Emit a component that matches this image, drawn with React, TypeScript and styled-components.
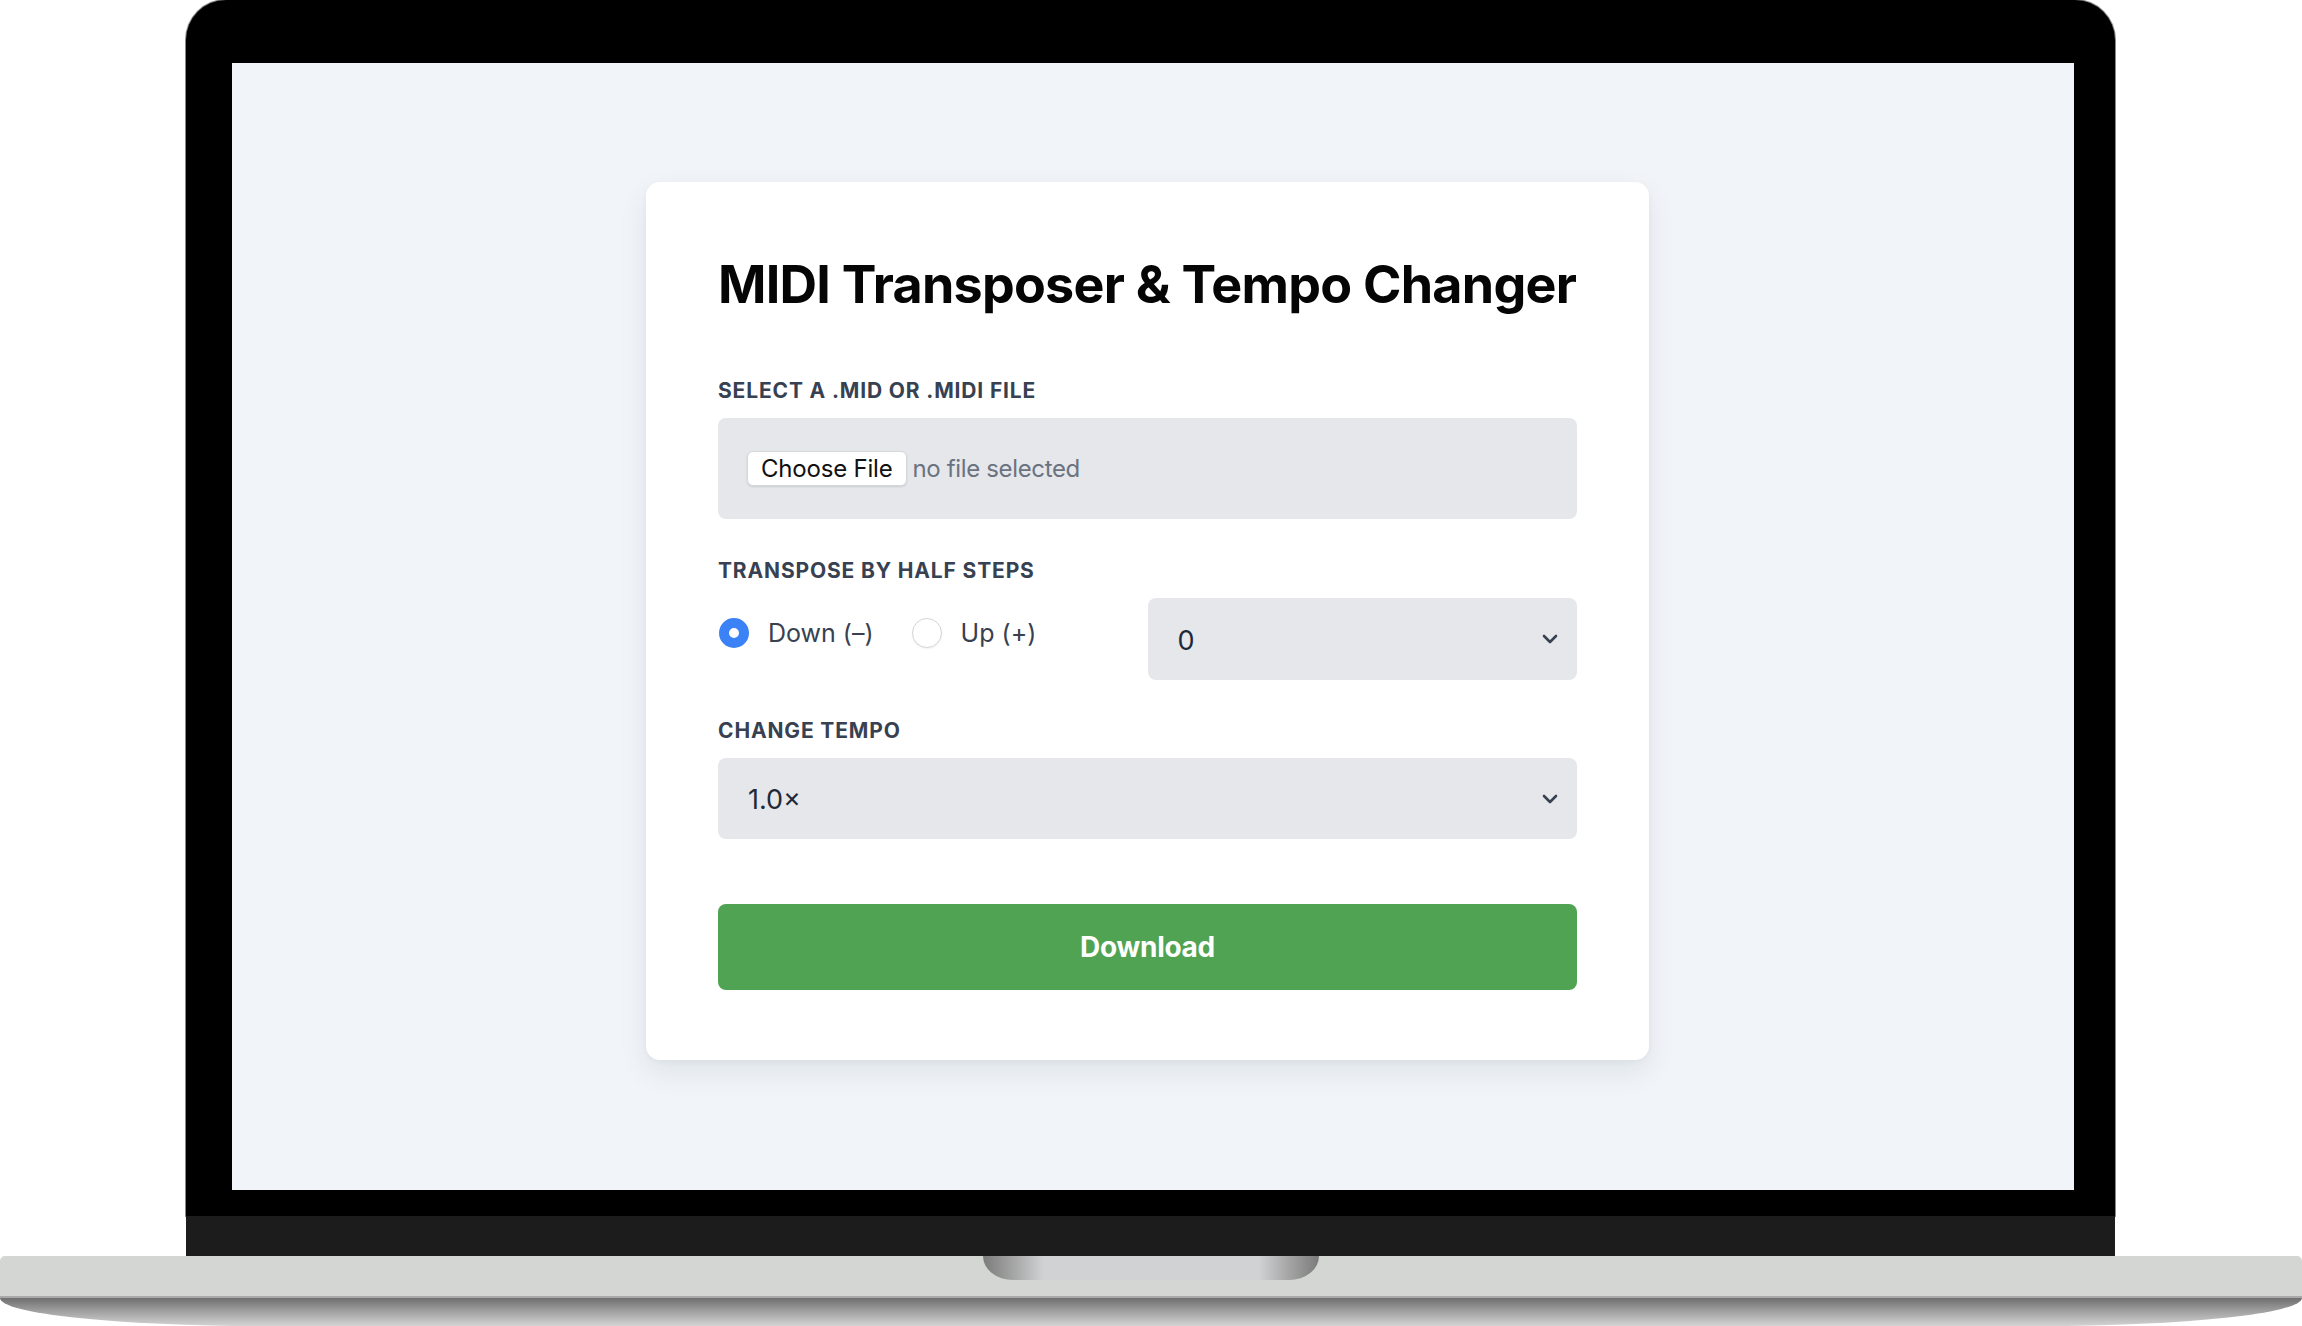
import React, { useState } from "react";
import styled, { createGlobalStyle } from "styled-components";

const GlobalStyle = createGlobalStyle`
  * { box-sizing: border-box; }
  html, body { margin: 0; padding: 0; background: #ffffff; }
  body { font-family: Inter, "Noto Sans", "Liberation Sans", sans-serif; }
`;

const Stage = styled.div`
  width: 2302px;
  height: 1326px;
  overflow: hidden;
  display: flex;
  flex-direction: column;
  background: #ffffff;
`;

const Lid = styled.div`
  margin: 0 187px 0 186px;
  display: flex;
  flex-direction: column;
`;

const Bezel = styled.div`
  background: #000000;
  border-radius: 40px 40px 0 0;
  padding: 63px 41px 26px 46px;
  box-shadow: 0 0 0 1px #8a8a8a;
`;

const Hinge = styled.div`
  height: 40px;
  background: #1c1c1c;
`;

const Screen = styled.div`
  height: 1127px;
  background: #f1f5f9;
  display: flex;
  flex-direction: column;
  align-items: center;
  padding: 119px 11px 0 0;
`;

const Card = styled.div`
  width: 1003px;
  background: #ffffff;
  border-radius: 14px;
  padding: 72px 72px 70px;
  box-shadow: 0 12px 30px rgba(15, 23, 42, 0.08), 0 2px 6px rgba(15, 23, 42, 0.04);
  display: flex;
  flex-direction: column;
`;

const Title = styled.h1`
  margin: 0 0 62px;
  font-size: 52px;
  line-height: 62px;
  font-weight: 700;
  color: #050505;
  letter-spacing: -0.75px;
  white-space: nowrap;
`;

const Field = styled.div<{ $gapAfter?: number }>`
  display: flex;
  flex-direction: column;
  gap: 15px;
  margin-bottom: ${(p) => p.$gapAfter ?? 39}px;
`;

const Label = styled.div`
  font-size: 21px;
  line-height: 25px;
  font-weight: 700;
  color: #374151;
  text-transform: uppercase;
  letter-spacing: 0.85px;
`;

const FileBox = styled.label`
  height: 101px;
  background: #e5e7eb;
  border-radius: 8px;
  display: flex;
  align-items: center;
  padding: 0 29px;
  gap: 6px;
  cursor: pointer;
`;

const HiddenInput = styled.input`
  display: none;
`;

const FileButton = styled.span`
  height: 35px;
  padding: 0 13px;
  display: inline-flex;
  align-items: center;
  background: #ffffff;
  border: 1px solid #d6d8dc;
  border-radius: 6px;
  box-shadow: 0 1px 2px rgba(0, 0, 0, 0.12);
  font-size: 24px;
  letter-spacing: -0.2px;
  color: #111111;
`;

const FileHint = styled.span`
  font-size: 24px;
  letter-spacing: -0.35px;
  color: #6b7280;
`;

const Row = styled.div`
  display: grid;
  grid-template-columns: 1fr 1fr;
  align-items: center;
`;

const RadioGroup = styled.div`
  display: flex;
  align-items: center;
  gap: 38px;
  padding-bottom: 12px;
  padding-left: 1px;
`;

const RadioOption = styled.label`
  display: flex;
  align-items: center;
  gap: 19px;
  font-size: 25px;
  line-height: 30px;
  color: #374151;
  cursor: pointer;
`;

const Radio = styled.input`
  appearance: none;
  margin: 0;
  width: 30px;
  height: 30px;
  border-radius: 50%;
  background: #ffffff;
  border: 1.5px solid #d4d5d8;
  box-shadow: 0 1px 2px rgba(0, 0, 0, 0.06);
  &:checked {
    border: 10px solid #3b82f6;
    box-shadow: none;
  }
`;

const SelectWrap = styled.div<{ $height: number }>`
  position: relative;
  height: ${(p) => p.$height}px;
`;

const Select = styled.select`
  appearance: none;
  width: 100%;
  height: 100%;
  border: none;
  outline: none;
  border-radius: 8px;
  background: #e5e7eb;
  padding: 2px 60px 0 30px;
  font-family: Inter, "Noto Sans", "Liberation Sans", sans-serif;
  font-size: 27px;
  color: #1f2937;
`;

const Chevron = styled.svg`
  position: absolute;
  right: 19px;
  top: 50%;
  margin-top: -5px;
  width: 16px;
  height: 10px;
  pointer-events: none;
`;

const DownloadButton = styled.button`
  margin-top: 26px;
  height: 86px;
  border: none;
  border-radius: 8px;
  background: #4fa352;
  color: #ffffff;
  font-family: Inter, "Noto Sans", "Liberation Sans", sans-serif;
  font-size: 28px;
  font-weight: 700;
  letter-spacing: -0.3px;
  cursor: pointer;
`;

const Base = styled.div`
  display: flex;
  flex-direction: column;
`;

const Deck = styled.div`
  height: 42px;
  background: #d4d6d3;
  border-radius: 5px 5px 0 0;
  border-bottom: 2px solid #a9aaa8;
  display: flex;
  justify-content: center;
`;

const Notch = styled.div`
  width: 336px;
  height: 24px;
  border-radius: 0 0 30px 30px / 0 0 24px 24px;
  background: linear-gradient(
    to right,
    #7b7b7b 0%,
    #a4a5a4 9%,
    #d1d2d4 18%,
    #d1d2d4 82%,
    #a4a5a4 91%,
    #7b7b7b 100%
  );
`;

const Lip = styled.div`
  height: 28px;
  border-radius: 0 0 260px 260px / 0 0 28px 28px;
  background: linear-gradient(to bottom, #6f6f6f 0%, #a3a3a3 50%, #d4d4d4 100%);
`;

const ChevronIcon = () => (
  <Chevron viewBox="0 0 16 10" fill="none">
    <path d="M2 2l6 6 6-6" stroke="#374151" strokeWidth="2.6" strokeLinecap="round" strokeLinejoin="round" />
  </Chevron>
);

export default function App() {
  const [dir, setDir] = useState<"down" | "up">("down");
  const steps = Array.from({ length: 13 }, (_, i) => i);
  const tempos = ["0.5×", "0.75×", "1.0×", "1.25×", "1.5×", "2.0×"];

  return (
    <>
      <GlobalStyle />
      <Stage>
        <Lid>
          <Bezel>
            <Screen>
              <Card>
                <Title>MIDI Transposer &amp; Tempo Changer</Title>

                <Field>
                  <Label>Select a .mid or .midi file</Label>
                  <FileBox>
                    <HiddenInput type="file" accept=".mid,.midi" />
                    <FileButton>Choose File</FileButton>
                    <FileHint>no file selected</FileHint>
                  </FileBox>
                </Field>

                <Field $gapAfter={38}>
                  <Label>Transpose by half steps</Label>
                  <Row>
                    <RadioGroup>
                      <RadioOption>
                        <Radio
                          type="radio"
                          name="dir"
                          checked={dir === "down"}
                          onChange={() => setDir("down")}
                        />
                        Down (–)
                      </RadioOption>
                      <RadioOption>
                        <Radio
                          type="radio"
                          name="dir"
                          checked={dir === "up"}
                          onChange={() => setDir("up")}
                        />
                        Up (+)
                      </RadioOption>
                    </RadioGroup>
                    <SelectWrap $height={82}>
                      <Select defaultValue="0">
                        {steps.map((s) => (
                          <option key={s} value={String(s)}>
                            {s}
                          </option>
                        ))}
                      </Select>
                      <ChevronIcon />
                    </SelectWrap>
                  </Row>
                </Field>

                <Field>
                  <Label>Change tempo</Label>
                  <SelectWrap $height={81}>
                    <Select defaultValue="1.0×">
                      {tempos.map((t) => (
                        <option key={t} value={t}>
                          {t}
                        </option>
                      ))}
                    </Select>
                    <ChevronIcon />
                  </SelectWrap>
                </Field>

                <DownloadButton>Download</DownloadButton>
              </Card>
            </Screen>
          </Bezel>
          <Hinge />
        </Lid>
        <Base>
          <Deck>
            <Notch />
          </Deck>
          <Lip />
        </Base>
      </Stage>
    </>
  );
}
